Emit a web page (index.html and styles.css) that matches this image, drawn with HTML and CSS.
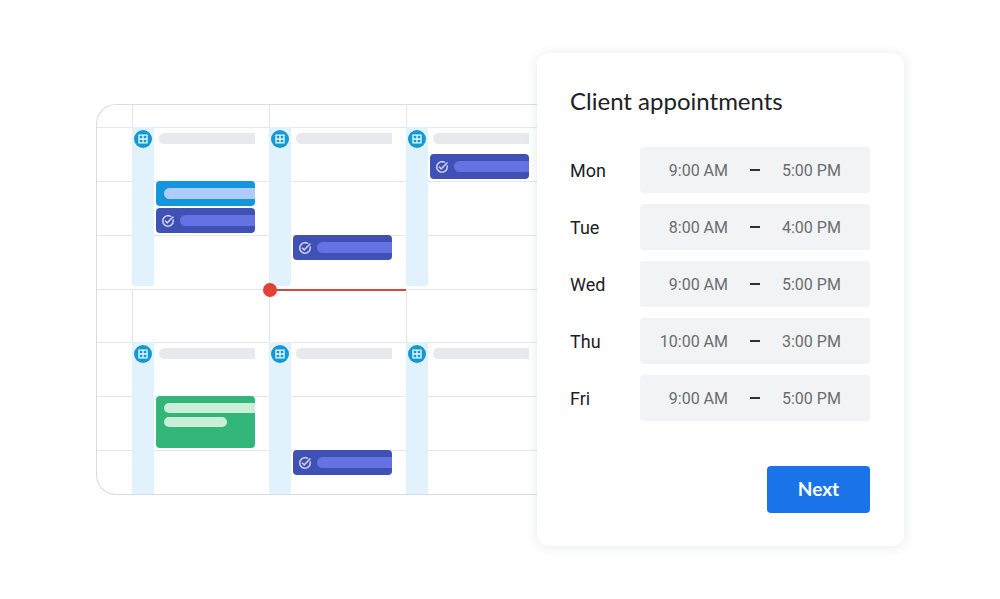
FILE: index.html
```html
<!DOCTYPE html>
<html lang="en">
<head>
  <meta charset="UTF-8">
  <meta name="viewport" content="width=device-width, initial-scale=1.0">
  <title>Client appointments</title>
  <link rel="stylesheet" href="styles.css">
</head>
<body>
  <!-- shared icons -->
  <svg class="sprite" aria-hidden="true">
    <symbol id="icon-grid" viewBox="0 0 18 18">
      <path d="M5 5.2h8v7.6H5zM9 5.2v7.6M5 9h8" fill="none" stroke="#e6fbff" stroke-width="1.3"/>
    </symbol>
    <symbol id="icon-task" viewBox="0 0 24 24">
      <path d="M22 5.2 10.6 16.6l-4.2-4.2 1.5-1.5 2.7 2.7L20.5 3.7zM19.8 10.2c.2.6.2 1.2.2 1.8a8 8 0 1 1-8-8c1.6 0 3.1.5 4.3 1.3l1.5-1.5A10 10 0 1 0 22 12c0-1.200-.2-2.300-.6-3.400z" fill="#dfe4ff" stroke="#dfe4ff" stroke-width=".3"/>
    </symbol>
  </svg>

  <main class="scene">
    <section class="calendar" aria-label="Calendar">
      <div class="column gutter">
        <div class="head"></div>
        <div class="block"></div>
        <div class="free"></div>
        <div class="block"></div>
      </div>

      <div class="column">
        <div class="head"></div>
        <div class="block">
          <div class="strip strip-end"><svg class="badge"><use href="#icon-grid"/></svg></div>
          <div class="slots">
            <div class="title-bar"></div>
            <div class="event event-blue slot-3"><span class="bar"></span></div>
            <div class="event event-indigo slot-4"><svg class="task"><use href="#icon-task"/></svg><span class="bar"></span></div>
          </div>
        </div>
        <div class="free"></div>
        <div class="block">
          <div class="strip"><svg class="badge"><use href="#icon-grid"/></svg></div>
          <div class="slots">
            <div class="title-bar"></div>
            <div class="event event-green slot-3"><span class="bar"></span><span class="bar bar-short"></span></div>
          </div>
        </div>
      </div>

      <div class="column">
        <div class="head"></div>
        <div class="block">
          <div class="strip strip-end"><svg class="badge"><use href="#icon-grid"/></svg></div>
          <div class="slots">
            <div class="title-bar"></div>
            <div class="event event-indigo slot-5"><svg class="task"><use href="#icon-task"/></svg><span class="bar"></span></div>
          </div>
        </div>
        <div class="free"><div class="now"></div></div>
        <div class="block">
          <div class="strip"><svg class="badge"><use href="#icon-grid"/></svg></div>
          <div class="slots">
            <div class="title-bar"></div>
            <div class="event event-indigo slot-5"><svg class="task"><use href="#icon-task"/></svg><span class="bar"></span></div>
          </div>
        </div>
      </div>

      <div class="column">
        <div class="head"></div>
        <div class="block">
          <div class="strip strip-end"><svg class="badge"><use href="#icon-grid"/></svg></div>
          <div class="slots">
            <div class="title-bar"></div>
            <div class="event event-indigo slot-2"><svg class="task"><use href="#icon-task"/></svg><span class="bar"></span></div>
          </div>
        </div>
        <div class="free"></div>
        <div class="block">
          <div class="strip"><svg class="badge"><use href="#icon-grid"/></svg></div>
          <div class="slots">
            <div class="title-bar"></div>
          </div>
        </div>
      </div>
    </section>

    <form class="card">
      <h1>Client appointments</h1>
      <div class="days">
        <div class="day">
          <label for="mon">Mon</label>
          <div class="range">
            <input class="from" id="mon" type="text" value="9:00 AM">
            <span class="dash"></span>
            <input type="text" value="5:00 PM" aria-label="Mon end">
          </div>
        </div>
        <div class="day">
          <label for="tue">Tue</label>
          <div class="range">
            <input class="from" id="tue" type="text" value="8:00 AM">
            <span class="dash"></span>
            <input type="text" value="4:00 PM" aria-label="Tue end">
          </div>
        </div>
        <div class="day">
          <label for="wed">Wed</label>
          <div class="range">
            <input class="from" id="wed" type="text" value="9:00 AM">
            <span class="dash"></span>
            <input type="text" value="5:00 PM" aria-label="Wed end">
          </div>
        </div>
        <div class="day">
          <label for="thu">Thu</label>
          <div class="range">
            <input class="from" id="thu" type="text" value="10:00 AM">
            <span class="dash"></span>
            <input type="text" value="3:00 PM" aria-label="Thu end">
          </div>
        </div>
        <div class="day">
          <label for="fri">Fri</label>
          <div class="range">
            <input class="from" id="fri" type="text" value="9:00 AM">
            <span class="dash"></span>
            <input type="text" value="5:00 PM" aria-label="Fri end">
          </div>
        </div>
      </div>
      <button type="button" class="next">Next</button>
    </form>
  </main>
</body>
</html>
```

FILE: styles.css
```css
* {
  box-sizing: border-box;
}
body {
  margin: 0;
  background-color: #fff;
  color: #202124;
  font-family: Roboto, Arial, sans-serif;
}
.sprite {
  display: none;
}
.scene {
  display: grid;
  grid-template-columns: minmax(0, 1fr) 367px;
  align-items: center;
  min-height: 100vh;
  padding: 0 96px;
}

/* calendar */
.calendar {
  display: grid;
  grid-template-columns: 35px repeat(3, 1fr);
  margin-right: -6px;
  border: 1px solid #dadce0;
  border-right: 0;
  border-radius: 20px 0 0 20px;
  overflow: hidden;
}
.column {
  min-width: 0;
}
.head {
  height: 22px;
  border-left: 1px solid #e4e5e7;
}
.block {
  display: flex;
  background: repeating-linear-gradient(to bottom, #e6e7e9 0 1px, transparent 1px 54px);
  height: 162px;
}
.free {
  position: relative;
  height: 53px;
  border-top: 1px solid #e4e5e7;
  border-left: 1px solid #e4e5e7;
}
.free + .block {
  height: 152px;
}
.gutter .head,
.gutter .free {
  border-left: 0;
}
.strip {
  width: 22px;
  padding-top: 3px;
  background-color: #e1f2fd;
}
.strip-end {
  margin-bottom: 3px;
  border-radius: 0 0 3px 3px;
}
.badge {
  display: block;
  width: 18px;
  height: 18px;
  margin: 0 auto;
  border-radius: 50%;
  background-color: #1698d3;
}
.slots {
  flex: 1;
  display: grid;
  grid-template-rows: repeat(5, 27px);
  padding: 0 14px 0 2px;
}
.title-bar {
  height: 11px;
  margin: 6px 0 0 3px;
  border-radius: 6px 0 0 6px;
  background-color: #e8e9ec;
}
.event {
  display: flex;
  align-items: center;
  margin-bottom: 2px;
  padding-left: 8px;
  border-radius: 4px;
  overflow: hidden;
}
.bar {
  flex: 1;
  height: 11px;
  border-radius: 6px 0 0 6px;
}
.event-blue {
  background-color: #1297dc;
}
.event-blue .bar {
  background-color: #aecbfa;
}
.event-indigo {
  gap: 5px;
  padding-left: 5px;
  background-color: #3f51b5;
}
.event-indigo .bar {
  background-color: #6374e2;
}
.task {
  width: 14px;
  height: 14px;
}
.event-green {
  grid-row-end: span 2;
  flex-direction: column;
  align-items: stretch;
  gap: 4px;
  padding-top: 7px;
  background-color: #33b679;
}
.event-green .bar {
  flex: none;
  height: 10px;
  background-color: #caefd7;
}
.event-green .bar-short {
  width: 63px;
  border-radius: 6px;
}
.slot-2 { grid-row-start: 2; }
.slot-3 { grid-row-start: 3; }
.slot-4 { grid-row-start: 4; }
.slot-5 { grid-row-start: 5; }

/* current time marker */
.now {
  position: absolute;
  top: -1px;
  left: 0;
  right: 0;
  height: 2px;
  background-color: #d0483f;
}
.now::before {
  content: "";
  position: absolute;
  top: -6px;
  left: -7px;
  width: 14px;
  height: 14px;
  border-radius: 50%;
  background-color: #e04238;
}

/* appointment card */
.card {
  position: relative;
  padding: 34px 34px 33px 33px;
  border-radius: 12px;
  background-color: #fff;
  box-shadow: 0 1px 12px rgba(60, 64, 67, 0.12);
}
h1 {
  margin: 0 0 32px;
  font-family: Lato, sans-serif;
  font-size: 24px;
  font-weight: 400;
  line-height: 28px;
}
.days {
  display: grid;
  gap: 11px;
}
.day {
  display: grid;
  grid-template-columns: 70px 1fr;
  align-items: center;
  font-size: 18px;
}
.range {
  display: flex;
  align-items: center;
  justify-content: center;
  gap: 22px;
  height: 46px;
  border-radius: 4px;
  background-color: #f1f3f4;
}
.range input {
  width: 70px;
  padding: 0;
  border: 0;
  background: none;
  color: #6a6d71;
  font-family: inherit;
  font-size: 16px;
}
.range .from {
  text-align: right;
}
.dash {
  width: 10px;
  height: 2px;
  background-color: #303134;
}
.next {
  display: block;
  width: 103px;
  height: 47px;
  margin: 45px 0 0 auto;
  padding: 0 0 2px;
  border: 0;
  border-radius: 4px;
  background-color: #1a73e8;
  color: #fff;
  font-family: Lato, sans-serif;
  font-size: 19px;
  font-weight: 700;
}
```
